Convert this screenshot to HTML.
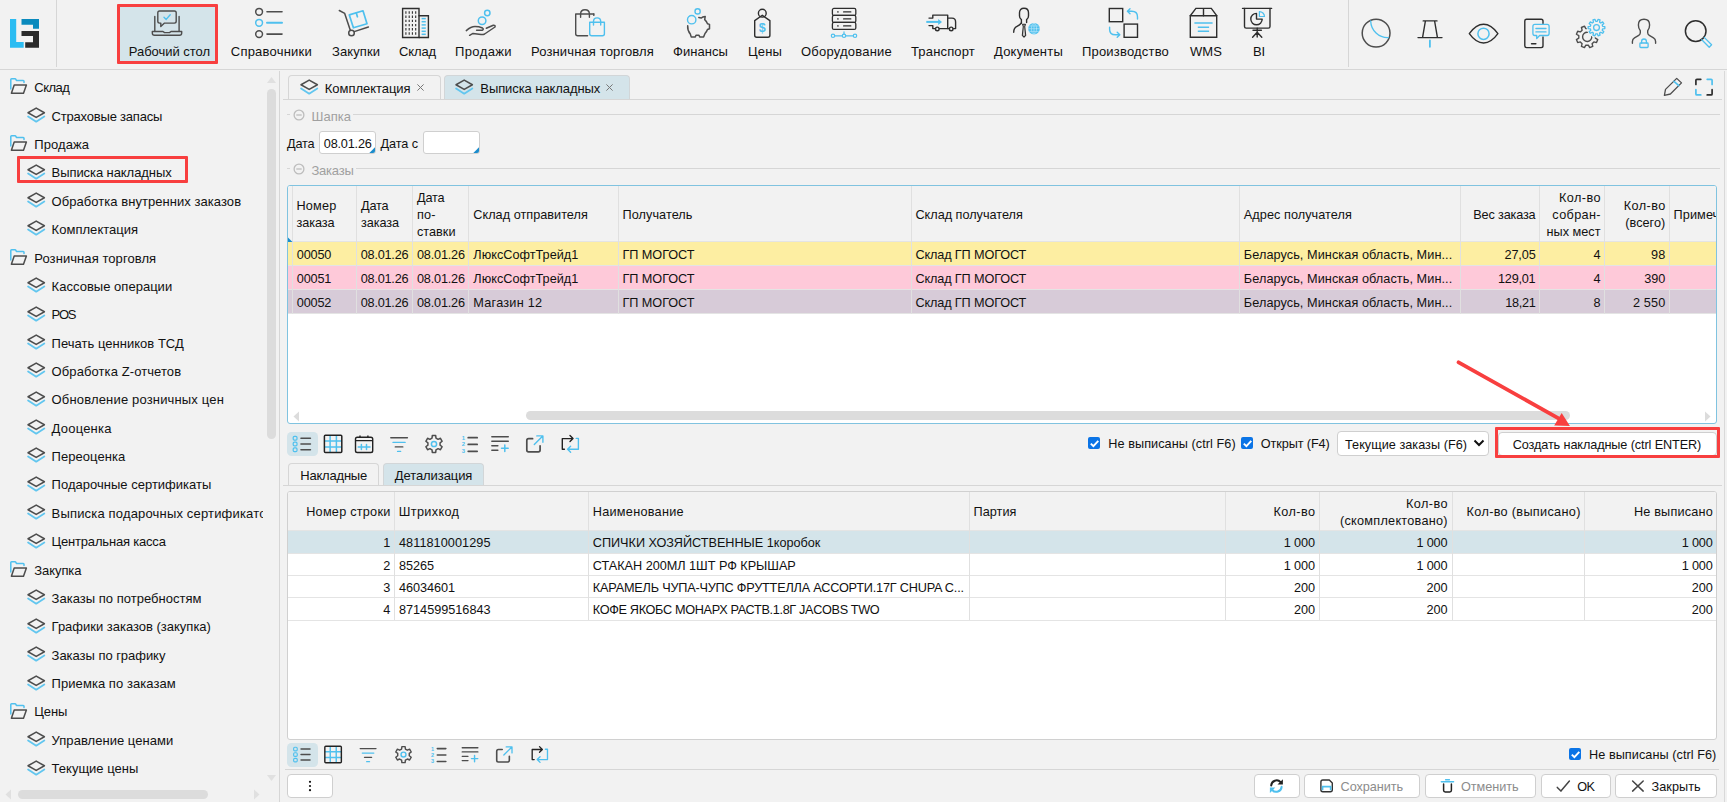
<!DOCTYPE html>
<html lang="ru"><head><meta charset="utf-8"><title>Выписка накладных</title><style>
*{box-sizing:border-box;margin:0;padding:0}
html,body{width:1727px;height:802px;overflow:hidden;background:#f2f2f2}
body{font-family:"Liberation Sans",sans-serif;font-size:12.7px;letter-spacing:0.1px;color:#111;position:relative}
.a{position:absolute}
.t{position:absolute;white-space:nowrap;line-height:16px;height:16px}
.f13{font-size:13px;letter-spacing:0}
.c{text-align:center}
.r{text-align:right}
.hl{position:absolute;height:1px;background:#d6d6d6}
.vl{position:absolute;width:1px;background:#d6d6d6}
svg{position:absolute;overflow:visible}
.tab{position:absolute;border:1px solid #d6d6d6;border-bottom:none;border-radius:4px 4px 0 0;background:#f2f2f2}
.tab.on{background:#d4e4ea;border-color:#d2d6d8}
.btn{position:absolute;background:#fff;border:1px solid #cfcfcf;border-radius:4px}
.grid{position:absolute;background:#fff;border:1px solid #d0d0d0;border-radius:3px;overflow:hidden}
.gh{position:absolute;background:#f2f2f2;left:0;top:0;right:0}
.cb{position:absolute;width:12px;height:12px;background:#0b74e6;border-radius:2px}
.gray{color:#a0a0a0}
.gray2{color:#8c8c8c}
</style></head><body>
<div class="hl" style="left:0;top:69px;width:1727px"></div>
<div class="vl" style="left:56px;top:0;height:67px"></div>
<div class="vl" style="left:1348px;top:0;height:67px"></div>
<svg style="left:10px;top:19px" width="29" height="29" viewBox="0 0 29 29"><path d="M0 0 H6.2 V22.9 H13.7 V28.8 H0 Z" fill="#2bbcf2"/><path d="M11.5 0 H29 V9.7 H23 V5.8 H11.5 Z" fill="#0a8abd"/><path d="M11.5 11.9 H29 V28.8 H15.2 V23.2 H23 V17.1 H11.5 Z" fill="#2b2b2b"/></svg>
<div class="a" style="left:117px;top:4px;width:101px;height:60px;background:#d4e4ea;border:3px solid #f83f3f;border-radius:1px"></div>
<div class="t f13" style="left:128.80px;top:44px;letter-spacing:-0.034px;">Рабочий стол</div>
<div class="t f13" style="left:230.80px;top:44px;letter-spacing:0.221px;">Справочники</div>
<div class="t f13" style="left:332.00px;top:44px;letter-spacing:0.085px;">Закупки</div>
<div class="t f13" style="left:399.00px;top:44px;letter-spacing:-0.125px;">Склад</div>
<div class="t f13" style="left:455.00px;top:44px;letter-spacing:0.386px;">Продажи</div>
<div class="t f13" style="left:531.00px;top:44px;letter-spacing:0.133px;">Розничная торговля</div>
<div class="t f13" style="left:673.00px;top:44px;letter-spacing:0.060px;">Финансы</div>
<div class="t f13" style="left:748.00px;top:44px;letter-spacing:0.156px;">Цены</div>
<div class="t f13" style="left:801.00px;top:44px;letter-spacing:0.215px;">Оборудование</div>
<div class="t f13" style="left:911.00px;top:44px;letter-spacing:0.163px;">Транспорт</div>
<div class="t f13" style="left:994.00px;top:44px;letter-spacing:0.220px;">Документы</div>
<div class="t f13" style="left:1082.00px;top:44px;letter-spacing:0.186px;">Производство</div>
<div class="t f13" style="left:1190.00px;top:44px;letter-spacing:0.073px;">WMS</div>
<div class="t f13" style="left:1253.00px;top:44px;letter-spacing:-0.148px;">BI</div>
<svg style="left:0;top:0" width="1727" height="70" fill="none" stroke-linecap="round" stroke-linejoin="round"><g stroke="#4d4d4d" stroke-width="1.4"><path d="M154.8 16.5 V31.3 M179.1 16.5 V31.3"/><path d="M152.3 31.5 H163 L164.5 32.6 H169.5 L171 31.5 H181.7 V33 Q181.7 35.2 179.5 35.2 H154.5 Q152.3 35.2 152.3 33 Z"/><path d="M159.6 11 H174.4 Q176.2 11 176.2 12.8 V21.3 Q176.2 23.1 174.4 23.1 H164.5 L160.8 26.6 V23.1 H159.6 Q157.8 23.1 157.8 21.3 V12.8 Q157.8 11 159.6 11 Z"/></g><path d="M164 17.3 L166.2 19.4 L170.2 14.8" stroke="#4fc0ee" stroke-width="1.4"/><circle cx="259.1" cy="11.8" r="3.4" stroke="#4d4d4d" stroke-width="1.5"/><path d="M267 11.8 H282" stroke="#4d4d4d" stroke-width="1.6"/><circle cx="259.1" cy="22.8" r="3.4" stroke="#4fc0ee" stroke-width="1.5"/><path d="M267 22.8 H282" stroke="#4fc0ee" stroke-width="2"/><circle cx="259.1" cy="34.1" r="3.4" stroke="#4d4d4d" stroke-width="1.5"/><path d="M267 34.1 H282" stroke="#4d4d4d" stroke-width="1.6"/><g stroke="#4d4d4d" stroke-width="1.5"><path d="M339.3 10.5 L344.7 13.4 L350.3 30.3"/><circle cx="351.5" cy="33" r="2.8"/><path d="M354.2 31.6 L368.4 27"/></g><g stroke="#4fc0ee" stroke-width="1.7"><path d="M349.3 14.9 L363 10.8 L367 23.7 L353.4 27.8 Z"/><path d="M356.3 12.9 L357.4 16.8"/></g><g stroke="#2e2e2e" stroke-width="1.4" stroke-linejoin="miter"><path d="M402.6 8.5 H419 V37.5 H402.6 Z"/><path d="M419 15.7 H428.4 V37.5 H419"/></g><g stroke="#2e2e2e" stroke-width="1.1" stroke-linecap="butt"><path d="M405.9 11.3 V13.7"/><path d="M405.9 15.5 V17.9"/><path d="M405.9 19.7 V22.099999999999998"/><path d="M405.9 23.900000000000002 V26.3"/><path d="M405.9 28.1 V30.5"/><path d="M405.9 32.3 V34.7"/><path d="M409.2 11.3 V13.7"/><path d="M409.2 15.5 V17.9"/><path d="M409.2 19.7 V22.099999999999998"/><path d="M409.2 23.900000000000002 V26.3"/><path d="M409.2 28.1 V30.5"/><path d="M409.2 32.3 V34.7"/><path d="M412.4 11.3 V13.7"/><path d="M412.4 15.5 V17.9"/><path d="M412.4 19.7 V22.099999999999998"/><path d="M412.4 23.900000000000002 V26.3"/><path d="M412.4 28.1 V30.5"/><path d="M412.4 32.3 V34.7"/><path d="M415.7 11.3 V13.7"/><path d="M415.7 15.5 V17.9"/><path d="M415.7 19.7 V22.099999999999998"/><path d="M415.7 23.900000000000002 V26.3"/><path d="M415.7 28.1 V30.5"/><path d="M415.7 32.3 V34.7"/></g><g stroke="#4fc0ee" stroke-width="1.5" stroke-linecap="butt"><path d="M421.6 18.6 H425.8"/><path d="M421.6 21.7 H425.8"/><path d="M421.6 24.9 H425.8"/><path d="M421.6 28.1 H425.8"/><path d="M421.6 31.3 H425.8"/><path d="M421.6 34.3 H425.8"/></g><g stroke="#4fc0ee" stroke-width="1.5"><circle cx="482.1" cy="20.7" r="3.8"/><circle cx="487.3" cy="13" r="2.7"/></g><g stroke="#4d4d4d" stroke-width="1.5"><path d="M466.3 30.6 Q471 26.6 475 26.6 Q479 26.6 482.5 28 Q484 29 482.5 30.2 L476.6 30.3"/><path d="M486.3 28.2 L493.3 25.2 Q495.6 25 495 27 L484.6 34 Q483 34.8 481 34.5 L473 33.4 L469.6 35.3"/></g><g stroke="#4d4d4d" stroke-width="1.4"><path d="M593.8 14 H575.7 V33.8 Q575.7 35.8 577.7 35.8 H587.6"/><path d="M580.6 17.3 V14 Q580.6 9.8 585 9.8 Q589.4 9.8 589.4 14 V17.3"/><path d="M593.8 14 V15.4"/></g><g stroke="#4fc0ee" stroke-width="1.4"><path d="M589.7 22.3 H604.4 V33.8 Q604.4 35.8 602.4 35.8 H591.7 Q589.7 35.8 589.7 33.8 Z"/><path d="M593.5 25 V21.5 Q593.5 17.9 597.1 17.9 Q600.7 17.9 600.7 21.5 V25"/></g><g stroke="#4fc0ee" stroke-width="1.4"><circle cx="691.7" cy="19.7" r="4.2"/><circle cx="697.6" cy="11.4" r="2.6"/></g><g stroke="#4d4d4d" stroke-width="1.5"><path d="M687.7 25.8 Q687.3 30.5 690.3 34 L691.2 36.9 H695.3 L696 35.3 H699 L699.7 36.9 H703.6 L705 33.5 Q706.8 31.5 707.5 29.5 L709.5 28.7 V24.4 L707.5 23.8 Q706.6 21.3 704.7 19.6 L705.2 16.5 Q702.5 16.7 701.3 18 L698.8 17.6"/></g><g stroke="#2e2e2e" stroke-width="1.4"><circle cx="762.3" cy="13.2" r="3.9"/><path d="M762.3 15.3 L769.9 20.6 V35.2 Q769.9 37.2 767.9 37.2 H756.7 Q754.7 37.2 754.7 35.2 V20.6 Z"/></g><text x="762.3" y="32.2" text-anchor="middle" font-family="Liberation Sans,sans-serif" font-size="12.5" font-weight="bold" fill="#4fc0ee" stroke="none">$</text><g stroke="#2e2e2e" stroke-width="1.3"><rect x="832.4" y="8.4" width="23.4" height="7" rx="1.5"/><path d="M843.6 11.9 H850.8"/><path d="M837.6 11.9 H838.2"/><rect x="832.4" y="15.4" width="23.4" height="7" rx="1.5"/><path d="M843.6 18.9 H850.8"/><path d="M837.6 18.9 H838.2"/><rect x="832.4" y="22.4" width="23.4" height="7" rx="1.5"/><path d="M843.6 25.9 H850.8"/><path d="M837.6 25.9 H838.2"/></g><g stroke="#4fc0ee" stroke-width="1.2"><path d="M834.7 35.8 H842.3 M845.7 35.8 H853.3 M844 31.8 V34.1"/><circle cx="833" cy="35.8" r="1.7"/><circle cx="844" cy="35.8" r="1.7"/><circle cx="855" cy="35.8" r="1.7"/></g><g stroke="#2e2e2e" stroke-width="1.4"><path d="M929 18.1 H932.8 V15.1 H947.7 V28.6 H939.4 M935 28.6 H932.8 V25.6 H929"/><path d="M947.7 18.1 H952 Q955.6 18.1 955.6 22 V28.6 H953.4 M949 28.6 H947.7"/><circle cx="937.3" cy="28.9" r="1.8"/><circle cx="951.2" cy="28.9" r="1.8"/></g><path d="M926.3 21.9 H939" stroke="#4fc0ee" stroke-width="2" stroke-linecap="butt"/><path d="M938.2 18.9 L942 21.9 L938.2 24.9 Z" fill="#4fc0ee" stroke="none"/><g stroke="#2e2e2e" stroke-width="1.4"><path d="M1021.4 23 V19.6 Q1019.5 18.4 1019.5 16 V12.8 Q1019.5 8.3 1024 8.3 Q1028.5 8.3 1028.5 12.8 V16 Q1028.5 18.4 1026.6 19.6 V22.6"/><path d="M1021.4 23 Q1019.8 25 1017 26.4 Q1013.7 28 1013.7 32.3"/><path d="M1022.6 24.3 L1025.4 24.3 L1024.7 26.5 L1025.7 35.3 L1024 37.2 L1022.3 35.3 L1023.3 26.5 Z" fill="#c9c9c9" stroke-width="1.1"/></g><circle cx="1034" cy="28.7" r="5.8" fill="#4fc0ee" stroke="none"/><g stroke="#d9f1fb" stroke-width="0.6" opacity="0.8"><path d="M1028.5 28.7 H1039.5 M1034 23.2 V34.2 M1029.6 26 H1038.4 M1029.6 31.4 H1038.4"/><ellipse cx="1034" cy="28.7" rx="2.6" ry="5.5"/></g><g stroke="#2e2e2e" stroke-width="1.4" stroke-linejoin="miter"><rect x="1109.3" y="8.5" width="13.4" height="13.2"/><rect x="1124.1" y="24.1" width="13.4" height="13.2"/></g><g stroke="#4fc0ee" stroke-width="1.4"><path d="M1137.5 19 V17 Q1137.5 11.3 1131.8 11.3 H1127.6 M1130 8.8 L1127.4 11.3 L1130 13.8"/><path d="M1109.6 27.3 V29.2 Q1109.6 34.8 1115.3 34.8 H1119.6 M1117.2 32.3 L1119.8 34.8 L1117.2 37.3"/></g><g stroke="#2e2e2e" stroke-width="1.4" stroke-linejoin="miter"><path d="M1190.3 15.7 H1216.7 V37.3 H1190.3 Z"/><path d="M1190.3 15.7 L1195.9 8.4 H1211.3 L1216.7 15.7 M1203.5 8.4 V15.7"/></g><g stroke="#4fc0ee" stroke-width="1.5" stroke-linecap="butt"><path d="M1194.4 22.9 H1212.6 M1197.8 27.2 H1209.1 M1197.8 31.3 H1209.1"/></g><g stroke="#2e2e2e" stroke-width="1.4"><path d="M1242.5 8.4 H1271.6"/><path d="M1244.5 8.4 V26.4 Q1244.5 28.1 1246.2 28.1 H1268.3 Q1270 28.1 1270 26.4 V8.4"/><path d="M1257.2 28.1 V37 M1253 30.3 H1261.4 M1257.2 32.2 L1252.6 37.3 M1257.2 32.2 L1261.8 37.3"/><path d="M1256.5 13.4 A5.7 5.7 0 1 0 1262.2 19.1 H1256.5 Z"/></g><path d="M1259.4 11.6 A5 5 0 0 1 1264.5 16.5 H1259.4 Z" stroke="#4fc0ee" stroke-width="1.2"/></svg>
<svg style="left:0;top:0" width="1727" height="70" fill="none" stroke-linecap="round" stroke-linejoin="round"><circle cx="1376.1" cy="33.1" r="13.9" stroke="#4d4d4d" stroke-width="1.5"/><path d="M1370.7 21.0 A17 17 0 0 0 1388.4 37.6" stroke="#4fc0ee" stroke-width="1.3"/><g stroke="#2e2e2e" stroke-width="1.4"><path d="M1423.2 20.9 H1437 M1425.4 21 L1422.6 37.4 M1434.6 21 L1437.4 37.4 M1418 37.6 H1442"/></g><path d="M1429.9 40.5 V46.8" stroke="#4fc0ee" stroke-width="1.8"/><path d="M1469.3 33.7 Q1476 24.3 1483.6 24.3 Q1491.2 24.3 1497.9 33.7 Q1491.2 43 1483.6 43 Q1476 43 1469.3 33.7 Z" stroke="#2e2e2e" stroke-width="1.4"/><circle cx="1483.5" cy="33.8" r="5.6" stroke="#4fc0ee" stroke-width="1.5"/><g stroke="#2e2e2e" stroke-width="1.4"><path d="M1543 23.5 V21 Q1543 19.2 1541.2 19.2 H1526.6 Q1524.8 19.2 1524.8 21 V45.8 Q1524.8 47.6 1526.6 47.6 H1541.2 Q1543 47.6 1543 45.8 V37"/><path d="M1531.6 43.8 H1535.8" stroke-width="1.6"/></g><g stroke="#4fc0ee" stroke-width="1.3"><path d="M1534.8 24.4 H1547.2 Q1549.1 24.4 1549.1 26.3 V33.6 Q1549.1 35.5 1547.2 35.5 H1539.6 L1536.7 38.6 V35.5 H1534.8 Q1532.9 35.5 1532.9 33.6 V26.3 Q1532.9 24.4 1534.8 24.4 Z"/><path d="M1535.9 28.5 H1546 M1535.9 31.9 H1546"/></g><path d="M1595.41 38.15 L1597.78 39.55 L1596.52 42.57 L1593.86 41.89 L1592.09 43.66 L1592.77 46.32 L1589.75 47.58 L1588.35 45.21 L1585.85 45.21 L1584.45 47.58 L1581.43 46.32 L1582.11 43.66 L1580.34 41.89 L1577.68 42.57 L1576.42 39.55 L1578.79 38.15 L1578.79 35.65 L1576.42 34.25 L1577.68 31.23 L1580.34 31.91 L1582.11 30.14 L1581.43 27.48 L1584.45 26.22 L1585.85 28.59 L1588.35 28.59 L1589.75 26.22 L1592.77 27.48 L1592.09 30.14 L1593.86 31.91 L1596.52 31.23 L1597.78 34.25 L1595.41 35.65 Z" stroke="#4d4d4d" stroke-width="1.4"/><path d="M1587.5 32.3 A4.6 4.6 0 1 0 1591.7 36" stroke="#4d4d4d" stroke-width="1.4"/><circle cx="1596.5" cy="27.6" r="10" fill="#f2f2f2" stroke="none"/><path d="M1602.68 26.38 L1604.84 26.60 L1604.84 28.60 L1602.68 28.82 L1602.22 30.25 L1603.84 31.69 L1602.66 33.31 L1600.78 32.22 L1599.57 33.10 L1600.03 35.22 L1598.13 35.84 L1597.25 33.86 L1595.75 33.86 L1594.87 35.84 L1592.97 35.22 L1593.43 33.10 L1592.22 32.22 L1590.34 33.31 L1589.16 31.69 L1590.78 30.25 L1590.32 28.82 L1588.16 28.60 L1588.16 26.60 L1590.32 26.38 L1590.78 24.95 L1589.16 23.51 L1590.34 21.89 L1592.22 22.98 L1593.43 22.10 L1592.97 19.98 L1594.87 19.36 L1595.75 21.34 L1597.25 21.34 L1598.13 19.36 L1600.03 19.98 L1599.57 22.10 L1600.78 22.98 L1602.66 21.89 L1603.84 23.51 L1602.22 24.95 Z" stroke="#4fc0ee" stroke-width="1.3"/><circle cx="1596.5" cy="27.6" r="2.9" stroke="#4fc0ee" stroke-width="1.3"/><g stroke="#4d4d4d" stroke-width="1.4"><path d="M1632.4 43.3 V41.5 Q1632.4 39 1634.5 37.8 L1638.7 35.4 Q1640.3 34.5 1640.3 32.8 V30.8 Q1638.4 28.6 1638.4 25 Q1638.4 19.3 1644 19.3 Q1649.6 19.3 1649.6 25 Q1649.6 28.6 1647.7 30.8 V32.8 Q1647.7 34.5 1649.3 35.4 L1653.5 37.8 Q1655.6 39 1655.6 41.5 V43.3"/></g><g stroke="#4fc0ee" stroke-width="1.3"><rect x="1639.9" y="43" width="8.2" height="4.5" rx="0.8"/><path d="M1641.6 43 V41.4 Q1641.6 39 1644 39 Q1646.4 39 1646.4 41.4 V43"/></g><circle cx="1695.7" cy="31.1" r="10.3" stroke="#2e2e2e" stroke-width="1.5"/><path d="M1704.2 37.4 L1711.6 44.8 L1709.2 47.2 L1701.8 39.8" stroke="#4fc0ee" stroke-width="1.3"/></svg>
<div class="vl" style="left:279px;top:71px;height:731px"></div>
<div class="a" style="left:0;top:71px;width:263px;height:715px;overflow:hidden">
<svg style="left:9px;top:7.35px" width="19" height="16" viewBox="0 0 19 16" fill="none" stroke-linejoin="round" stroke-linecap="round"><path d="M1.8 11 V1.6 Q1.8 0.8 2.6 0.8 H6 Q6.6 0.8 6.9 1.4 L7.4 2.5 H14.2 Q15 2.5 15 3.3 V4.6" stroke="#4fc0ee" stroke-width="1.5"/><path d="M5.2 6.9 H17.4 L14.5 15.2 H2.4 Z" stroke="#4d4d4d" stroke-width="1.5"/></svg>
<div class="t f13" style="left:34.30px;top:9px;letter-spacing:-0.525px;">Склад</div>
<svg style="left:26.9px;top:35.79px" width="19" height="16" viewBox="0 0 19 16" fill="none" stroke-linejoin="round" stroke-linecap="round"><path d="M1.1 9.5 L9.2 14.7 L17.3 9.5" stroke="#62c6ef" stroke-width="1.8"/><path d="M1.0 5.75 L9.2 1.1 L17.4 5.75 L9.2 10.4 Z" stroke="#4d4d4d" stroke-width="1.5"/></svg>
<div class="t f13" style="left:51.60px;top:38px;letter-spacing:-0.200px;">Страховые запасы</div>
<svg style="left:9px;top:64.13px" width="19" height="16" viewBox="0 0 19 16" fill="none" stroke-linejoin="round" stroke-linecap="round"><path d="M1.8 11 V1.6 Q1.8 0.8 2.6 0.8 H6 Q6.6 0.8 6.9 1.4 L7.4 2.5 H14.2 Q15 2.5 15 3.3 V4.6" stroke="#4fc0ee" stroke-width="1.5"/><path d="M5.2 6.9 H17.4 L14.5 15.2 H2.4 Z" stroke="#4d4d4d" stroke-width="1.5"/></svg>
<div class="t f13" style="left:34.30px;top:66px;letter-spacing:0.091px;">Продажа</div>
<svg style="left:26.9px;top:92.57px" width="19" height="16" viewBox="0 0 19 16" fill="none" stroke-linejoin="round" stroke-linecap="round"><path d="M1.1 9.5 L9.2 14.7 L17.3 9.5" stroke="#62c6ef" stroke-width="1.8"/><path d="M1.0 5.75 L9.2 1.1 L17.4 5.75 L9.2 10.4 Z" stroke="#4d4d4d" stroke-width="1.5"/></svg>
<div class="t f13" style="left:51.60px;top:94px;letter-spacing:-0.077px;">Выписка накладных</div>
<svg style="left:26.9px;top:120.96px" width="19" height="16" viewBox="0 0 19 16" fill="none" stroke-linejoin="round" stroke-linecap="round"><path d="M1.1 9.5 L9.2 14.7 L17.3 9.5" stroke="#62c6ef" stroke-width="1.8"/><path d="M1.0 5.75 L9.2 1.1 L17.4 5.75 L9.2 10.4 Z" stroke="#4d4d4d" stroke-width="1.5"/></svg>
<div class="t f13" style="left:51.60px;top:123px;letter-spacing:0.050px;">Обработка внутренних заказов</div>
<svg style="left:26.9px;top:149.35px" width="19" height="16" viewBox="0 0 19 16" fill="none" stroke-linejoin="round" stroke-linecap="round"><path d="M1.1 9.5 L9.2 14.7 L17.3 9.5" stroke="#62c6ef" stroke-width="1.8"/><path d="M1.0 5.75 L9.2 1.1 L17.4 5.75 L9.2 10.4 Z" stroke="#4d4d4d" stroke-width="1.5"/></svg>
<div class="t f13" style="left:51.60px;top:151px;letter-spacing:0.032px;">Комплектация</div>
<svg style="left:9px;top:177.69px" width="19" height="16" viewBox="0 0 19 16" fill="none" stroke-linejoin="round" stroke-linecap="round"><path d="M1.8 11 V1.6 Q1.8 0.8 2.6 0.8 H6 Q6.6 0.8 6.9 1.4 L7.4 2.5 H14.2 Q15 2.5 15 3.3 V4.6" stroke="#4fc0ee" stroke-width="1.5"/><path d="M5.2 6.9 H17.4 L14.5 15.2 H2.4 Z" stroke="#4d4d4d" stroke-width="1.5"/></svg>
<div class="t f13" style="left:34.30px;top:180px;letter-spacing:0.072px;">Розничная торговля</div>
<svg style="left:26.9px;top:206.13px" width="19" height="16" viewBox="0 0 19 16" fill="none" stroke-linejoin="round" stroke-linecap="round"><path d="M1.1 9.5 L9.2 14.7 L17.3 9.5" stroke="#62c6ef" stroke-width="1.8"/><path d="M1.0 5.75 L9.2 1.1 L17.4 5.75 L9.2 10.4 Z" stroke="#4d4d4d" stroke-width="1.5"/></svg>
<div class="t f13" style="left:51.60px;top:208px;letter-spacing:0.023px;">Кассовые операции</div>
<svg style="left:26.9px;top:234.52px" width="19" height="16" viewBox="0 0 19 16" fill="none" stroke-linejoin="round" stroke-linecap="round"><path d="M1.1 9.5 L9.2 14.7 L17.3 9.5" stroke="#62c6ef" stroke-width="1.8"/><path d="M1.0 5.75 L9.2 1.1 L17.4 5.75 L9.2 10.4 Z" stroke="#4d4d4d" stroke-width="1.5"/></svg>
<div class="t f13" style="left:51.60px;top:236px;letter-spacing:-1.256px;">POS</div>
<svg style="left:26.9px;top:262.91px" width="19" height="16" viewBox="0 0 19 16" fill="none" stroke-linejoin="round" stroke-linecap="round"><path d="M1.1 9.5 L9.2 14.7 L17.3 9.5" stroke="#62c6ef" stroke-width="1.8"/><path d="M1.0 5.75 L9.2 1.1 L17.4 5.75 L9.2 10.4 Z" stroke="#4d4d4d" stroke-width="1.5"/></svg>
<div class="t f13" style="left:51.60px;top:265px;letter-spacing:0.022px;">Печать ценников ТСД</div>
<svg style="left:26.9px;top:291.3px" width="19" height="16" viewBox="0 0 19 16" fill="none" stroke-linejoin="round" stroke-linecap="round"><path d="M1.1 9.5 L9.2 14.7 L17.3 9.5" stroke="#62c6ef" stroke-width="1.8"/><path d="M1.0 5.75 L9.2 1.1 L17.4 5.75 L9.2 10.4 Z" stroke="#4d4d4d" stroke-width="1.5"/></svg>
<div class="t f13" style="left:51.60px;top:293px;letter-spacing:0.091px;">Обработка Z-отчетов</div>
<svg style="left:26.9px;top:319.69px" width="19" height="16" viewBox="0 0 19 16" fill="none" stroke-linejoin="round" stroke-linecap="round"><path d="M1.1 9.5 L9.2 14.7 L17.3 9.5" stroke="#62c6ef" stroke-width="1.8"/><path d="M1.0 5.75 L9.2 1.1 L17.4 5.75 L9.2 10.4 Z" stroke="#4d4d4d" stroke-width="1.5"/></svg>
<div class="t f13" style="left:51.60px;top:321px;letter-spacing:0.162px;">Обновление розничных цен</div>
<svg style="left:26.9px;top:348.08px" width="19" height="16" viewBox="0 0 19 16" fill="none" stroke-linejoin="round" stroke-linecap="round"><path d="M1.1 9.5 L9.2 14.7 L17.3 9.5" stroke="#62c6ef" stroke-width="1.8"/><path d="M1.0 5.75 L9.2 1.1 L17.4 5.75 L9.2 10.4 Z" stroke="#4d4d4d" stroke-width="1.5"/></svg>
<div class="t f13" style="left:51.60px;top:350px;letter-spacing:0.209px;">Дооценка</div>
<svg style="left:26.9px;top:376.47px" width="19" height="16" viewBox="0 0 19 16" fill="none" stroke-linejoin="round" stroke-linecap="round"><path d="M1.1 9.5 L9.2 14.7 L17.3 9.5" stroke="#62c6ef" stroke-width="1.8"/><path d="M1.0 5.75 L9.2 1.1 L17.4 5.75 L9.2 10.4 Z" stroke="#4d4d4d" stroke-width="1.5"/></svg>
<div class="t f13" style="left:51.60px;top:378px;letter-spacing:0.041px;">Переоценка</div>
<svg style="left:26.9px;top:404.86px" width="19" height="16" viewBox="0 0 19 16" fill="none" stroke-linejoin="round" stroke-linecap="round"><path d="M1.1 9.5 L9.2 14.7 L17.3 9.5" stroke="#62c6ef" stroke-width="1.8"/><path d="M1.0 5.75 L9.2 1.1 L17.4 5.75 L9.2 10.4 Z" stroke="#4d4d4d" stroke-width="1.5"/></svg>
<div class="t f13" style="left:51.60px;top:406px;letter-spacing:0.014px;">Подарочные сертификаты</div>
<svg style="left:26.9px;top:433.25px" width="19" height="16" viewBox="0 0 19 16" fill="none" stroke-linejoin="round" stroke-linecap="round"><path d="M1.1 9.5 L9.2 14.7 L17.3 9.5" stroke="#62c6ef" stroke-width="1.8"/><path d="M1.0 5.75 L9.2 1.1 L17.4 5.75 L9.2 10.4 Z" stroke="#4d4d4d" stroke-width="1.5"/></svg>
<div class="t f13" style="left:51.60px;top:435px;letter-spacing:0.172px;">Выписка подарочных сертификато</div>
<svg style="left:26.9px;top:461.64px" width="19" height="16" viewBox="0 0 19 16" fill="none" stroke-linejoin="round" stroke-linecap="round"><path d="M1.1 9.5 L9.2 14.7 L17.3 9.5" stroke="#62c6ef" stroke-width="1.8"/><path d="M1.0 5.75 L9.2 1.1 L17.4 5.75 L9.2 10.4 Z" stroke="#4d4d4d" stroke-width="1.5"/></svg>
<div class="t f13" style="left:51.60px;top:463px;letter-spacing:-0.188px;">Центральная касса</div>
<svg style="left:9px;top:489.98px" width="19" height="16" viewBox="0 0 19 16" fill="none" stroke-linejoin="round" stroke-linecap="round"><path d="M1.8 11 V1.6 Q1.8 0.8 2.6 0.8 H6 Q6.6 0.8 6.9 1.4 L7.4 2.5 H14.2 Q15 2.5 15 3.3 V4.6" stroke="#4fc0ee" stroke-width="1.5"/><path d="M5.2 6.9 H17.4 L14.5 15.2 H2.4 Z" stroke="#4d4d4d" stroke-width="1.5"/></svg>
<div class="t f13" style="left:34.30px;top:492px;letter-spacing:-0.082px;">Закупка</div>
<svg style="left:26.9px;top:518.42px" width="19" height="16" viewBox="0 0 19 16" fill="none" stroke-linejoin="round" stroke-linecap="round"><path d="M1.1 9.5 L9.2 14.7 L17.3 9.5" stroke="#62c6ef" stroke-width="1.8"/><path d="M1.0 5.75 L9.2 1.1 L17.4 5.75 L9.2 10.4 Z" stroke="#4d4d4d" stroke-width="1.5"/></svg>
<div class="t f13" style="left:51.60px;top:520px;letter-spacing:0.019px;">Заказы по потребностям</div>
<svg style="left:26.9px;top:546.81px" width="19" height="16" viewBox="0 0 19 16" fill="none" stroke-linejoin="round" stroke-linecap="round"><path d="M1.1 9.5 L9.2 14.7 L17.3 9.5" stroke="#62c6ef" stroke-width="1.8"/><path d="M1.0 5.75 L9.2 1.1 L17.4 5.75 L9.2 10.4 Z" stroke="#4d4d4d" stroke-width="1.5"/></svg>
<div class="t f13" style="left:51.60px;top:548px;letter-spacing:-0.009px;">Графики заказов (закупка)</div>
<svg style="left:26.9px;top:575.2px" width="19" height="16" viewBox="0 0 19 16" fill="none" stroke-linejoin="round" stroke-linecap="round"><path d="M1.1 9.5 L9.2 14.7 L17.3 9.5" stroke="#62c6ef" stroke-width="1.8"/><path d="M1.0 5.75 L9.2 1.1 L17.4 5.75 L9.2 10.4 Z" stroke="#4d4d4d" stroke-width="1.5"/></svg>
<div class="t f13" style="left:51.60px;top:577px;letter-spacing:-0.038px;">Заказы по графику</div>
<svg style="left:26.9px;top:603.59px" width="19" height="16" viewBox="0 0 19 16" fill="none" stroke-linejoin="round" stroke-linecap="round"><path d="M1.1 9.5 L9.2 14.7 L17.3 9.5" stroke="#62c6ef" stroke-width="1.8"/><path d="M1.0 5.75 L9.2 1.1 L17.4 5.75 L9.2 10.4 Z" stroke="#4d4d4d" stroke-width="1.5"/></svg>
<div class="t f13" style="left:51.60px;top:605px;letter-spacing:0.057px;">Приемка по заказам</div>
<svg style="left:9px;top:631.93px" width="19" height="16" viewBox="0 0 19 16" fill="none" stroke-linejoin="round" stroke-linecap="round"><path d="M1.8 11 V1.6 Q1.8 0.8 2.6 0.8 H6 Q6.6 0.8 6.9 1.4 L7.4 2.5 H14.2 Q15 2.5 15 3.3 V4.6" stroke="#4fc0ee" stroke-width="1.5"/><path d="M5.2 6.9 H17.4 L14.5 15.2 H2.4 Z" stroke="#4d4d4d" stroke-width="1.5"/></svg>
<div class="t f13" style="left:34.30px;top:633px;letter-spacing:-0.119px;">Цены</div>
<svg style="left:26.9px;top:660.37px" width="19" height="16" viewBox="0 0 19 16" fill="none" stroke-linejoin="round" stroke-linecap="round"><path d="M1.1 9.5 L9.2 14.7 L17.3 9.5" stroke="#62c6ef" stroke-width="1.8"/><path d="M1.0 5.75 L9.2 1.1 L17.4 5.75 L9.2 10.4 Z" stroke="#4d4d4d" stroke-width="1.5"/></svg>
<div class="t f13" style="left:51.60px;top:662px;letter-spacing:0.033px;">Управление ценами</div>
<svg style="left:26.9px;top:688.76px" width="19" height="16" viewBox="0 0 19 16" fill="none" stroke-linejoin="round" stroke-linecap="round"><path d="M1.1 9.5 L9.2 14.7 L17.3 9.5" stroke="#62c6ef" stroke-width="1.8"/><path d="M1.0 5.75 L9.2 1.1 L17.4 5.75 L9.2 10.4 Z" stroke="#4d4d4d" stroke-width="1.5"/></svg>
<div class="t f13" style="left:51.60px;top:690px;letter-spacing:0.005px;">Текущие цены</div>
</div>
<div class="a" style="left:17px;top:156px;width:171px;height:27px;border:3px solid #f83f3f;border-radius:1px"></div>
<svg style="left:266px;top:76px" width="11" height="8"><path d="M5.5 1 L10 7 H1 Z" fill="#e0e0e0"/></svg>
<div class="a" style="left:267px;top:89px;width:9px;height:350px;border-radius:5px;background:#dcdcdc"></div>
<svg style="left:266px;top:774px" width="11" height="8"><path d="M1 1 H10 L5.5 7 Z" fill="#e0e0e0"/></svg>
<svg style="left:5px;top:789px" width="7" height="11"><path d="M6 0.5 V10.5 L0.5 5.5 Z" fill="#e0e0e0"/></svg>
<div class="a" style="left:18px;top:790px;width:190px;height:9px;border-radius:5px;background:#dcdcdc"></div>
<svg style="left:253px;top:789px" width="7" height="11"><path d="M1 0.5 V10.5 L6.5 5.5 Z" fill="#e0e0e0"/></svg>
<div class="vl" style="left:1723.7px;top:71px;height:731px;background:#d9d9d9;width:1.5px"></div>
<div class="tab" style="left:288px;top:75px;width:153px;height:25px"></div>
<div class="tab on" style="left:444px;top:75px;width:186px;height:25px"></div>
<div class="hl" style="left:283px;top:99px;width:1439px"></div>
<svg style="left:299.8px;top:78.9px" width="19" height="16" viewBox="0 0 19 16" fill="none" stroke-linejoin="round" stroke-linecap="round"><path d="M1.1 9.5 L9.2 14.7 L17.3 9.5" stroke="#62c6ef" stroke-width="1.8"/><path d="M1.0 5.75 L9.2 1.1 L17.4 5.75 L9.2 10.4 Z" stroke="#4d4d4d" stroke-width="1.5"/></svg>
<div class="t f13" style="left:324.80px;top:81px;letter-spacing:-0.043px;">Комплектация</div>
<svg style="left:417.2px;top:84.1px" width="7" height="7" viewBox="0 0 7 7"><path d="M0.4 0.4 L6.6 6.6 M6.6 0.4 L0.4 6.6" stroke="#777" stroke-width="1"/></svg>
<svg style="left:455.3px;top:78.9px" width="19" height="16" viewBox="0 0 19 16" fill="none" stroke-linejoin="round" stroke-linecap="round"><path d="M1.1 9.5 L9.2 14.7 L17.3 9.5" stroke="#62c6ef" stroke-width="1.8"/><path d="M1.0 5.75 L9.2 1.1 L17.4 5.75 L9.2 10.4 Z" stroke="#4d4d4d" stroke-width="1.5"/></svg>
<div class="t f13" style="left:480.30px;top:81px;letter-spacing:-0.077px;">Выписка накладных</div>
<svg style="left:606px;top:84px" width="7" height="7" viewBox="0 0 7 7"><path d="M0.4 0.4 L6.6 6.6 M6.6 0.4 L0.4 6.6" stroke="#777" stroke-width="1"/></svg>
<svg style="left:0;top:0" width="1727" height="110" fill="none" stroke-linecap="round" stroke-linejoin="round"><g stroke="#4d4d4d" stroke-width="1.3"><path d="M1676.7 78.4 L1681.5 82.9 L1670.4 94 L1664.4 95.3 L1665.5 89.4 Z"/></g><path d="M1674 81.3 L1678.8 85.7" stroke="#4fc0ee" stroke-width="1.6"/></svg>
<svg style="left:0;top:0" width="1727" height="110" fill="none" stroke-linecap="round" stroke-linejoin="round"><g stroke-width="1.7" stroke-linejoin="round"><path d="M1695.9 84.5 V80.3 Q1695.9 79.3 1696.9 79.3 H1700.8" stroke="#2e2e2e"/><path d="M1707.2 79.3 H1711.1 Q1712.1 79.3 1712.1 80.3 V84.5" stroke="#4fc0ee"/><path d="M1695.9 89.7 V93.9 Q1695.9 94.9 1696.9 94.9 H1700.8" stroke="#4fc0ee"/><path d="M1707.2 94.9 H1711.1 Q1712.1 94.9 1712.1 93.9 V89.7" stroke="#2e2e2e"/></g></svg>
<div class="hl" style="left:287px;top:114px;width:3px"></div>
<svg style="left:293.4px;top:108.8px" width="12" height="12" viewBox="0 0 12 12"><circle cx="6" cy="6" r="4.9" fill="none" stroke="#bdbdbd" stroke-width="1.3"/><path d="M3.3 6 H8.7" stroke="#bdbdbd" stroke-width="1.3"/></svg>
<div class="t gray f13" style="left:311.50px;top:109px;letter-spacing:0.022px;">Шапка</div>
<div class="hl" style="left:353.0px;top:114px;width:1367.0px"></div>
<div class="hl" style="left:287px;top:168px;width:3px"></div>
<svg style="left:293.4px;top:162.8px" width="12" height="12" viewBox="0 0 12 12"><circle cx="6" cy="6" r="4.9" fill="none" stroke="#bdbdbd" stroke-width="1.3"/><path d="M3.3 6 H8.7" stroke="#bdbdbd" stroke-width="1.3"/></svg>
<div class="t gray f13" style="left:311.50px;top:163px;letter-spacing:-0.242px;">Заказы</div>
<div class="hl" style="left:355.5px;top:168px;width:1364.5px"></div>
<div class="t " style="left:287.00px;top:136px;letter-spacing:-0.152px;">Дата</div>
<div class="btn" style="left:319px;top:131px;width:57px;height:23px;border-radius:3px;overflow:hidden"><div class="a" style="right:-4px;bottom:-4px;width:8px;height:8px;background:#1a8ccc;transform:rotate(45deg)"></div></div>
<div class="t " style="left:323.80px;top:136px;letter-spacing:-0.199px;">08.01.26</div>
<div class="t " style="left:380.50px;top:136px;letter-spacing:-0.078px;">Дата с</div>
<div class="btn" style="left:423px;top:131px;width:57px;height:23px;border-radius:3px;overflow:hidden"><div class="a" style="right:-4px;bottom:-4px;width:8px;height:8px;background:#1a8ccc;transform:rotate(45deg)"></div></div>
<div class="grid" style="left:287px;top:185px;width:1430px;height:239px;border-color:#80c3e0">
<div class="gh" style="height:56px"></div>
<div class="a" style="left:0;top:56px;width:1430px;height:23px;background:#fdeea2"></div>
<div class="a" style="left:0;top:80px;width:1430px;height:23px;background:#fec9d9"></div>
<div class="a" style="left:0;top:104px;width:1430px;height:23px;background:#d7cbd8"></div>
<div class="hl" style="left:0;top:55px;width:1430px;background:#e4e4e4"></div>
<div class="hl" style="left:0;top:79px;width:1430px;background:#e4e4e4"></div>
<div class="hl" style="left:0;top:103px;width:1430px;background:#e4e4e4"></div>
<div class="hl" style="left:0;top:127px;width:1430px;background:#e4e4e4"></div>
<div class="vl" style="left:4px;top:0;height:128px;background:#e0e0e0"></div>
<div class="vl" style="left:68px;top:0;height:128px;background:#e0e0e0"></div>
<div class="vl" style="left:124px;top:0;height:128px;background:#e0e0e0"></div>
<div class="vl" style="left:180px;top:0;height:128px;background:#e0e0e0"></div>
<div class="vl" style="left:330px;top:0;height:128px;background:#e0e0e0"></div>
<div class="vl" style="left:623px;top:0;height:128px;background:#e0e0e0"></div>
<div class="vl" style="left:951px;top:0;height:128px;background:#e0e0e0"></div>
<div class="vl" style="left:1172px;top:0;height:128px;background:#e0e0e0"></div>
<div class="vl" style="left:1251px;top:0;height:128px;background:#e0e0e0"></div>
<div class="vl" style="left:1316px;top:0;height:128px;background:#e0e0e0"></div>
<div class="vl" style="left:1381px;top:0;height:128px;background:#e0e0e0"></div>
<div class="t " style="left:8.50px;top:12px;letter-spacing:0.188px;">Номер</div>
<div class="t " style="left:8.50px;top:29px;letter-spacing:-0.083px;">заказа</div>
<div class="t " style="left:73.00px;top:12px;letter-spacing:-0.152px;">Дата</div>
<div class="t " style="left:73.00px;top:29px;letter-spacing:-0.083px;">заказа</div>
<div class="t " style="left:129.00px;top:4px;letter-spacing:-0.152px;">Дата</div>
<div class="t " style="left:129.00px;top:21px;">по-</div>
<div class="t " style="left:129.00px;top:38px;letter-spacing:0.008px;">ставки</div>
<div class="t " style="left:185.30px;top:21px;letter-spacing:0.017px;">Склад отправителя</div>
<div class="t " style="left:334.50px;top:21px;letter-spacing:0.064px;">Получатель</div>
<div class="t " style="left:627.40px;top:21px;letter-spacing:-0.007px;">Склад получателя</div>
<div class="t " style="left:955.80px;top:21px;letter-spacing:0.055px;">Адрес получателя</div>
<div class="t " style="left:1185.24px;top:21px;letter-spacing:-0.159px;">Вес заказа</div>
<div class="t " style="left:1270.92px;top:4px;letter-spacing:0.424px;">Кол-во</div>
<div class="t " style="left:1264.33px;top:21px;letter-spacing:0.335px;">собран-</div>
<div class="t " style="left:1258.51px;top:38px;letter-spacing:0.008px;">ных мест</div>
<div class="t " style="left:1335.72px;top:12px;letter-spacing:0.424px;">Кол-во</div>
<div class="t " style="left:1337.32px;top:29px;letter-spacing:0.020px;">(всего)</div>
<div class="a" style="left:1381px;top:0;width:47px;height:56px;overflow:hidden">
<div class="t " style="left:4.50px;top:21px;">Примечание</div>
</div>
<div class="t " style="left:8.80px;top:61px;letter-spacing:-0.176px;">00050</div>
<div class="t " style="left:72.80px;top:61px;letter-spacing:-0.236px;">08.01.26</div>
<div class="t " style="left:129.00px;top:61px;letter-spacing:-0.199px;">08.01.26</div>
<div class="t " style="left:185.30px;top:61px;letter-spacing:0.017px;">ЛюксСофтТрейд1</div>
<div class="t " style="left:334.50px;top:61px;letter-spacing:-0.054px;">ГП МОГОСТ</div>
<div class="t " style="left:627.40px;top:61px;letter-spacing:-0.128px;">Склад ГП МОГОСТ</div>
<div class="t " style="left:955.80px;top:61px;letter-spacing:0.073px;">Беларусь, Минская область, Мин...</div>
<div class="t " style="left:1216.55px;top:61px;letter-spacing:-0.150px;">27,05</div>
<div class="t " style="left:1305.44px;top:61px;">4</div>
<div class="t " style="left:1363.09px;top:61px;letter-spacing:0.088px;">98</div>
<div class="t " style="left:8.80px;top:85px;letter-spacing:-0.176px;">00051</div>
<div class="t " style="left:72.80px;top:85px;letter-spacing:-0.236px;">08.01.26</div>
<div class="t " style="left:129.00px;top:85px;letter-spacing:-0.199px;">08.01.26</div>
<div class="t " style="left:185.30px;top:85px;letter-spacing:0.017px;">ЛюксСофтТрейд1</div>
<div class="t " style="left:334.50px;top:85px;letter-spacing:-0.054px;">ГП МОГОСТ</div>
<div class="t " style="left:627.40px;top:85px;letter-spacing:-0.128px;">Склад ГП МОГОСТ</div>
<div class="t " style="left:955.80px;top:85px;letter-spacing:0.073px;">Беларусь, Минская область, Мин...</div>
<div class="t " style="left:1209.98px;top:85px;letter-spacing:-0.219px;">129,01</div>
<div class="t " style="left:1305.44px;top:85px;">4</div>
<div class="t " style="left:1356.24px;top:85px;letter-spacing:-0.057px;">390</div>
<div class="t " style="left:8.80px;top:109px;letter-spacing:-0.176px;">00052</div>
<div class="t " style="left:72.80px;top:109px;letter-spacing:-0.236px;">08.01.26</div>
<div class="t " style="left:129.00px;top:109px;letter-spacing:-0.199px;">08.01.26</div>
<div class="t " style="left:185.30px;top:109px;letter-spacing:0.242px;">Магазин 12</div>
<div class="t " style="left:334.50px;top:109px;letter-spacing:-0.054px;">ГП МОГОСТ</div>
<div class="t " style="left:627.40px;top:109px;letter-spacing:-0.128px;">Склад ГП МОГОСТ</div>
<div class="t " style="left:955.80px;top:109px;letter-spacing:0.073px;">Беларусь, Минская область, Мин...</div>
<div class="t " style="left:1217.35px;top:109px;letter-spacing:-0.350px;">18,21</div>
<div class="t " style="left:1305.44px;top:109px;">8</div>
<div class="t " style="left:1344.95px;top:109px;letter-spacing:0.150px;">2 550</div>
<svg style="left:0;top:51px" width="5" height="5"><path d="M0 5 L0 0.5 L4.5 5 Z" fill="#1a8ccc"/></svg>
<svg style="left:5px;top:225px" width="7" height="11"><path d="M6 0.5 V10.5 L0.5 5.5 Z" fill="#dcdcdc"/></svg>
<div class="a" style="left:238px;top:225px;width:1044px;height:9px;border-radius:5px;background:#dcdcdc"></div>
<svg style="left:1416px;top:225px" width="7" height="11"><path d="M1 0.5 V10.5 L6.5 5.5 Z" fill="#dcdcdc"/></svg>
</div>
<div class="a" style="left:287px;top:432px;width:31px;height:24px;border-radius:4.5px;background:#d4e4ea"></div>
<svg style="left:0;top:0" width="1727" height="802" fill="none" stroke-linecap="round" stroke-linejoin="round"><rect x="293.2" y="436.3" width="3.8" height="3.8" rx="1.2" stroke="#4fc0ee" stroke-width="1.2"/><path d="M301 438.2 H310.4" stroke="#4d4d4d" stroke-width="1.6"/><rect x="293.2" y="442.1" width="3.8" height="3.8" rx="1.2" stroke="#4fc0ee" stroke-width="1.2"/><path d="M301 444 H310.4" stroke="#4d4d4d" stroke-width="1.6"/><rect x="293.2" y="447.90000000000003" width="3.8" height="3.8" rx="1.2" stroke="#4fc0ee" stroke-width="1.2"/><path d="M301 449.8 H310.4" stroke="#4d4d4d" stroke-width="1.6"/><g stroke="#4fc0ee" stroke-width="1.5" stroke-linecap="butt"><path d="M330.1 435.5 V452.3 M336.4 435.5 V452.3 M324.6 441 H341.6 M324.6 447 H341.6"/></g><rect x="324.4" y="435.3" width="17.4" height="17.2" rx="1" stroke="#222" stroke-width="1.5"/><g stroke="#222" stroke-width="1.4"><rect x="355.5" y="437.2" width="17.2" height="15.3" rx="1.8"/><path d="M355.5 440.6 H372.7 M360 435.6 V437 M367.9 435.6 V437" stroke-linecap="butt"/></g><g stroke="#4fc0ee" stroke-width="1.5"><path d="M358.2 447 H370 M361.4 444.6 V449.5 M366.5 444.6 V449.5"/></g><g stroke-width="1.4"><path d="M390.8 437.7 H407.4" stroke="#4d4d4d"/><path d="M393 442.4 H405.1" stroke="#4fc0ee"/><path d="M395.3 446.9 H402.8" stroke="#4d4d4d"/><path d="M397.6 451.4 H400.6" stroke="#4fc0ee"/></g><path d="M435.98 449.88 L435.70 452.43 L432.30 452.43 L432.02 449.88 L429.90 448.65 L427.55 449.69 L425.85 446.74 L427.92 445.23 L427.92 442.77 L425.85 441.26 L427.55 438.31 L429.90 439.35 L432.02 438.12 L432.30 435.57 L435.70 435.57 L435.98 438.12 L438.10 439.35 L440.45 438.31 L442.15 441.26 L440.08 442.77 L440.08 445.23 L442.15 446.74 L440.45 449.69 L438.10 448.65 Z" stroke="#4d4d4d" stroke-width="1.5"/><circle cx="434" cy="444" r="2.6" stroke="#4fc0ee" stroke-width="1.5"/><path d="M468.2 437.7 H477.2" stroke="#4d4d4d" stroke-width="1.7"/><text x="463.4" y="439.7" text-anchor="middle" font-family="Liberation Sans,sans-serif" font-size="5.9" font-weight="bold" fill="#4fc0ee" stroke="none">1</text><path d="M468.2 444.4 H477.2" stroke="#4d4d4d" stroke-width="1.7"/><text x="463.4" y="446.1" text-anchor="middle" font-family="Liberation Sans,sans-serif" font-size="5.9" font-weight="bold" fill="#4fc0ee" stroke="none">2</text><path d="M468.2 451.3 H477.2" stroke="#4d4d4d" stroke-width="1.7"/><text x="463.4" y="453" text-anchor="middle" font-family="Liberation Sans,sans-serif" font-size="5.9" font-weight="bold" fill="#4fc0ee" stroke="none">3</text><g stroke="#4d4d4d" stroke-width="1.4"><path d="M491.8 436.8 H508.3 M491.8 441.2 H508.3 M491.8 445.8 H497.9 M491.8 450.3 H497.9"/></g><g stroke="#4fc0ee" stroke-width="1.5"><path d="M501.5 448.2 H508.2 M504.8 444.9 V451.5"/></g><path d="M532.6 438.7 H528.6 Q526.8 438.7 526.8 440.5 V450 Q526.8 451.8 528.6 451.8 H538.3 Q540.1 451.8 540.1 450 V445.8" stroke="#4d4d4d" stroke-width="1.7"/><g stroke="#4fc0ee" stroke-width="1.4"><path d="M534.3 444.4 L542.8 436 M536.8 435.9 H542.9 V442.2"/></g><g stroke="#222" stroke-width="1.4"><path d="M564.4 449.2 H562.3 V438.6 H572.6 M570 435.6 L573 438.6 L570 441.6"/></g><g stroke="#4fc0ee" stroke-width="1.4"><path d="M576.2 438.4 H578.4 V449.2 H568 M570.6 446.2 L567.6 449.2 L570.6 452.2"/></g></svg>
<div class="cb" style="left:1088px;top:437.3px"></div><svg style="left:1087.5px;top:436.8px" width="13" height="13" viewBox="0 0 13 13"><path d="M2.8 6.6 L5.4 9.2 L10.3 3.8" fill="none" stroke="#fff" stroke-width="1.9"/></svg>
<div class="t " style="left:1108.30px;top:436px;letter-spacing:0.052px;">Не выписаны (ctrl F6)</div>
<div class="cb" style="left:1241.3px;top:437.3px"></div><svg style="left:1240.8px;top:436.8px" width="13" height="13" viewBox="0 0 13 13"><path d="M2.8 6.6 L5.4 9.2 L10.3 3.8" fill="none" stroke="#fff" stroke-width="1.9"/></svg>
<div class="t " style="left:1260.80px;top:436px;letter-spacing:-0.109px;">Открыт (F4)</div>
<div class="btn" style="left:1337px;top:431px;width:152px;height:25px"></div>
<div class="t " style="left:1345.00px;top:437px;letter-spacing:0.022px;">Текущие заказы (F6)</div>
<svg style="left:1473px;top:439px" width="12" height="8" viewBox="0 0 12 8"><path d="M1.5 1.5 L6 6 L10.5 1.5" fill="none" stroke="#111" stroke-width="2"/></svg>
<div class="btn" style="left:1498px;top:432px;width:219px;height:23.5px"></div>
<div class="a" style="left:1495px;top:427px;width:225px;height:31px;border:3px solid #f83f3f;border-radius:1px"></div>
<div class="t " style="left:1512.70px;top:437px;letter-spacing:-0.116px;">Создать накладные (ctrl ENTER)</div>
<svg style="left:0;top:0" width="1727" height="802"><path d="M1458.6 362.4 L1559 418.6" stroke="#f83f3f" stroke-width="3.9" stroke-linecap="round"/><path d="M1561.7 413.1 L1569.9 426.1 L1554.2 425.4 Z" fill="#f83f3f"/></svg>
<div class="tab" style="left:288px;top:463px;width:91px;height:23px"></div>
<div class="tab on" style="left:383px;top:463px;width:101px;height:23px"></div>
<div class="hl" style="left:283px;top:485px;width:1439px"></div>
<div class="t f13" style="left:300.30px;top:468px;letter-spacing:-0.212px;">Накладные</div>
<div class="t f13" style="left:394.80px;top:468px;letter-spacing:-0.085px;">Детализация</div>
<div class="grid" style="left:287px;top:491px;width:1430px;height:249px">
<div class="gh" style="height:39px"></div>
<div class="a" style="left:0;top:38px;width:1430px;height:23px;background:#d4e4ea"></div>
<div class="hl" style="left:0;top:38px;width:1430px;background:#e4e4e4"></div>
<div class="hl" style="left:0;top:61px;width:1430px;background:#e4e4e4"></div>
<div class="hl" style="left:0;top:83px;width:1430px;background:#e4e4e4"></div>
<div class="hl" style="left:0;top:105px;width:1430px;background:#e4e4e4"></div>
<div class="hl" style="left:0;top:128px;width:1430px;background:#e4e4e4"></div>
<div class="vl" style="left:106px;top:0;height:128px;background:#e0e0e0"></div>
<div class="vl" style="left:300px;top:0;height:128px;background:#e0e0e0"></div>
<div class="vl" style="left:681px;top:0;height:128px;background:#e0e0e0"></div>
<div class="vl" style="left:937px;top:0;height:128px;background:#e0e0e0"></div>
<div class="vl" style="left:1031px;top:0;height:128px;background:#e0e0e0"></div>
<div class="vl" style="left:1164px;top:0;height:128px;background:#e0e0e0"></div>
<div class="vl" style="left:1296px;top:0;height:128px;background:#e0e0e0"></div>
<div class="t " style="left:18.23px;top:12px;letter-spacing:0.235px;">Номер строки</div>
<div class="t " style="left:110.80px;top:12px;letter-spacing:0.336px;">Штрихкод</div>
<div class="t " style="left:304.80px;top:12px;letter-spacing:0.254px;">Наименование</div>
<div class="t " style="left:685.50px;top:12px;letter-spacing:0.044px;">Партия</div>
<div class="t " style="left:985.42px;top:12px;letter-spacing:0.424px;">Кол-во</div>
<div class="t " style="left:1118.02px;top:4px;letter-spacing:0.424px;">Кол-во</div>
<div class="t " style="left:1051.96px;top:21px;letter-spacing:0.260px;">(скомплектовано)</div>
<div class="t " style="left:1178.62px;top:12px;letter-spacing:0.317px;">Кол-во (выписано)</div>
<div class="t " style="left:1345.89px;top:12px;letter-spacing:0.188px;">Не выписано</div>
<div class="t " style="left:95.14px;top:43px;">1</div>
<div class="t " style="left:111.00px;top:43px;letter-spacing:0.054px;">4811810001295</div>
<div class="t " style="left:304.80px;top:43px;letter-spacing:-0.030px;">СПИЧКИ ХОЗЯЙСТВЕННЫЕ 1коробок</div>
<div class="t " style="left:995.85px;top:43px;letter-spacing:-0.150px;">1 000</div>
<div class="t " style="left:1128.45px;top:43px;letter-spacing:-0.150px;">1 000</div>
<div class="t " style="left:1393.65px;top:43px;letter-spacing:-0.150px;">1 000</div>
<div class="t " style="left:95.14px;top:65.60000000000002px;">2</div>
<div class="t " style="left:111.00px;top:65.60000000000002px;letter-spacing:-0.056px;">85265</div>
<div class="t " style="left:304.80px;top:65.60000000000002px;letter-spacing:-0.029px;">СТАКАН 200МЛ 1ШТ РФ КРЫШАР</div>
<div class="t " style="left:995.85px;top:65.60000000000002px;letter-spacing:-0.150px;">1 000</div>
<div class="t " style="left:1128.45px;top:65.60000000000002px;letter-spacing:-0.150px;">1 000</div>
<div class="t " style="left:1393.65px;top:65.60000000000002px;letter-spacing:-0.150px;">1 000</div>
<div class="t " style="left:95.14px;top:87.79999999999995px;">3</div>
<div class="t " style="left:111.00px;top:87.79999999999995px;letter-spacing:-0.057px;">46034601</div>
<div class="t " style="left:304.80px;top:87.79999999999995px;letter-spacing:-0.200px;">КАРАМЕЛЬ ЧУПА-ЧУПС ФРУТТЕЛЛА АССОРТИ.17Г CHUPA C...</div>
<div class="t " style="left:1005.94px;top:87.79999999999995px;letter-spacing:-0.057px;">200</div>
<div class="t " style="left:1138.54px;top:87.79999999999995px;letter-spacing:-0.057px;">200</div>
<div class="t " style="left:1403.74px;top:87.79999999999995px;letter-spacing:-0.057px;">200</div>
<div class="t " style="left:95.14px;top:109.79999999999995px;">4</div>
<div class="t " style="left:111.00px;top:109.79999999999995px;letter-spacing:-0.018px;">8714599516843</div>
<div class="t " style="left:304.80px;top:109.79999999999995px;letter-spacing:-0.341px;">КОФЕ ЯКОБС МОНАРХ РАСТВ.1.8Г JACOBS TWO</div>
<div class="t " style="left:1005.94px;top:109.79999999999995px;letter-spacing:-0.057px;">200</div>
<div class="t " style="left:1138.54px;top:109.79999999999995px;letter-spacing:-0.057px;">200</div>
<div class="t " style="left:1403.74px;top:109.79999999999995px;letter-spacing:-0.057px;">200</div>
</div>
<div class="a" style="left:287px;top:743px;width:31px;height:24px;border-radius:4.5px;background:#d4e4ea"></div>
<svg style="left:0;top:0" width="1727" height="802" fill="none" stroke-linecap="round" stroke-linejoin="round"><g transform="translate(302 754.6) scale(0.95) translate(-302 -754.6)"><rect x="293.2" y="746.9" width="3.8" height="3.8" rx="1.2" stroke="#4fc0ee" stroke-width="1.2"/><path d="M301 748.8 H310.4" stroke="#4d4d4d" stroke-width="1.6"/><rect x="293.2" y="752.7" width="3.8" height="3.8" rx="1.2" stroke="#4fc0ee" stroke-width="1.2"/><path d="M301 754.6 H310.4" stroke="#4d4d4d" stroke-width="1.6"/><rect x="293.2" y="758.5000000000001" width="3.8" height="3.8" rx="1.2" stroke="#4fc0ee" stroke-width="1.2"/><path d="M301 760.4000000000001 H310.4" stroke="#4d4d4d" stroke-width="1.6"/></g><g transform="translate(333 754.6) scale(0.95) translate(-333 -754.6)"><g stroke="#4fc0ee" stroke-width="1.5" stroke-linecap="butt"><path d="M330.1 746.1 V762.9000000000001 M336.4 746.1 V762.9000000000001 M324.6 751.6 H341.6 M324.6 757.6 H341.6"/></g><rect x="324.4" y="745.9000000000001" width="17.4" height="17.2" rx="1" stroke="#222" stroke-width="1.5"/></g><g transform="translate(368 754.6) scale(0.95) translate(-368 -754.6)"><g stroke-width="1.4"><path d="M359.8 748.3 H376.4" stroke="#4d4d4d"/><path d="M362 753.0 H374.1" stroke="#4fc0ee"/><path d="M364.3 757.5 H371.8" stroke="#4d4d4d"/><path d="M366.6 762.0 H369.6" stroke="#4fc0ee"/></g></g><g transform="translate(403.5 754.6) scale(0.95) translate(-403.5 -754.6)"><path d="M405.48 760.48 L405.20 763.03 L401.80 763.03 L401.52 760.48 L399.40 759.25 L397.05 760.29 L395.35 757.34 L397.42 755.83 L397.42 753.37 L395.35 751.86 L397.05 748.91 L399.40 749.95 L401.52 748.72 L401.80 746.17 L405.20 746.17 L405.48 748.72 L407.60 749.95 L409.95 748.91 L411.65 751.86 L409.58 753.37 L409.58 755.83 L411.65 757.34 L409.95 760.29 L407.60 759.25 Z" stroke="#4d4d4d" stroke-width="1.5"/><circle cx="403.5" cy="754.6" r="2.6" stroke="#4fc0ee" stroke-width="1.5"/></g><g transform="translate(439 754.6) scale(0.95) translate(-439 -754.6)"><path d="M437.2 748.3 H446.2" stroke="#4d4d4d" stroke-width="1.7"/><text x="432.4" y="750.3" text-anchor="middle" font-family="Liberation Sans,sans-serif" font-size="5.9" font-weight="bold" fill="#4fc0ee" stroke="none">1</text><path d="M437.2 755.0 H446.2" stroke="#4d4d4d" stroke-width="1.7"/><text x="432.4" y="756.7" text-anchor="middle" font-family="Liberation Sans,sans-serif" font-size="5.9" font-weight="bold" fill="#4fc0ee" stroke="none">2</text><path d="M437.2 761.9000000000001 H446.2" stroke="#4d4d4d" stroke-width="1.7"/><text x="432.4" y="763.6" text-anchor="middle" font-family="Liberation Sans,sans-serif" font-size="5.9" font-weight="bold" fill="#4fc0ee" stroke="none">3</text></g><g transform="translate(470 754.6) scale(0.95) translate(-470 -754.6)"><g stroke="#4d4d4d" stroke-width="1.4"><path d="M461.8 747.4000000000001 H478.3 M461.8 751.8 H478.3 M461.8 756.4000000000001 H467.9 M461.8 760.9000000000001 H467.9"/></g><g stroke="#4fc0ee" stroke-width="1.5"><path d="M471.5 758.8 H478.2 M474.8 755.5 V762.1"/></g></g><g transform="translate(504.5 754.6) scale(0.95) translate(-504.5 -754.6)"><path d="M502.1 749.3 H498.1 Q496.29999999999995 749.3 496.29999999999995 751.1 V760.6 Q496.29999999999995 762.4000000000001 498.1 762.4000000000001 H507.79999999999995 Q509.6 762.4000000000001 509.6 760.6 V756.4000000000001" stroke="#4d4d4d" stroke-width="1.7"/><g stroke="#4fc0ee" stroke-width="1.4"><path d="M503.79999999999995 755.0 L512.3 746.6 M506.29999999999995 746.5 H512.4 V752.8"/></g></g><g transform="translate(539.5 754.6) scale(0.95) translate(-539.5 -754.6)"><g stroke="#222" stroke-width="1.4"><path d="M533.9 759.8 H531.8 V749.2 H542.1 M539.5 746.2 L542.5 749.2 L539.5 752.2"/></g><g stroke="#4fc0ee" stroke-width="1.4"><path d="M545.7 749.0 H547.9 V759.8 H537.5 M540.1 756.8 L537.1 759.8 L540.1 762.8"/></g></g></svg>
<div class="cb" style="left:1569px;top:748px"></div><svg style="left:1568.5px;top:747.5px" width="13" height="13" viewBox="0 0 13 13"><path d="M2.8 6.6 L5.4 9.2 L10.3 3.8" fill="none" stroke="#fff" stroke-width="1.9"/></svg>
<div class="t " style="left:1589.00px;top:747px;letter-spacing:0.052px;">Не выписаны (ctrl F6)</div>
<div class="hl" style="left:285px;top:769px;width:1434px"></div>
<div class="btn" style="left:287px;top:774px;width:46px;height:24px"></div>
<svg style="left:308px;top:780px" width="4" height="12"><circle cx="2" cy="1.8" r="1.1" fill="#111"/><circle cx="2" cy="6" r="1.1" fill="#111"/><circle cx="2" cy="10.2" r="1.1" fill="#111"/></svg>
<div class="btn" style="left:1254px;top:774px;width:46px;height:24px"></div>
<div class="btn" style="left:1304px;top:774px;width:116px;height:24px"></div>
<div class="btn" style="left:1425px;top:774px;width:111px;height:24px"></div>
<div class="btn" style="left:1541px;top:774px;width:70px;height:24px"></div>
<div class="btn" style="left:1615px;top:774px;width:102px;height:24px"></div>
<svg style="left:0;top:0" width="1727" height="802" fill="none" stroke-linecap="round" stroke-linejoin="round"><path d="M1271.2 785.4 A5.4 5.4 0 0 1 1280.6 782.2" stroke="#222" stroke-width="2"/><path d="M1282.9 779.2 V784.6 H1277.5 Z" fill="#222" stroke="none"/><path d="M1281.6 786.8 A5.4 5.4 0 0 1 1272.2 790" stroke="#4fc0ee" stroke-width="2"/><path d="M1269.9 793 V787.6 H1275.3 Z" fill="#4fc0ee" stroke="none"/><path d="M1322.8 780 H1329.3 L1332.3 783 V789.8 Q1332.3 791.7 1330.4 791.7 H1322.8 Q1320.9 791.7 1320.9 789.8 V781.9 Q1320.9 780 1322.8 780 Z" stroke="#333" stroke-width="1.4"/><path d="M1322.6 790.3 V786.6 H1330.6 V790.3" stroke="#4fc0ee" stroke-width="1.6" stroke-linejoin="miter" stroke-linecap="butt"/><path d="M1441.3 781.8 H1453.6 M1445.6 779.8 H1449.4" stroke="#4fc0ee" stroke-width="1.4"/><path d="M1443.6 784 V790.3 Q1443.6 791.9 1445.2 791.9 H1449.8 Q1451.4 791.9 1451.4 790.3 V784" stroke="#222" stroke-width="1.5"/><path d="M1557.3 787.4 L1560.9 791.1 L1569.4 781" stroke="#444" stroke-width="1.5"/><path d="M1632.6 781 L1643.2 791.1 M1643.2 781 L1632.6 791.1" stroke="#444" stroke-width="1.5"/></svg>
<div class="t gray2" style="left:1340.60px;top:778.5px;letter-spacing:-0.074px;">Сохранить</div>
<div class="t gray2" style="left:1461.00px;top:778.5px;letter-spacing:-0.061px;">Отменить</div>
<div class="t " style="left:1577.30px;top:778.5px;letter-spacing:-0.722px;">OK</div>
<div class="t " style="left:1651.50px;top:778.5px;letter-spacing:0.061px;">Закрыть</div>
</body></html>
